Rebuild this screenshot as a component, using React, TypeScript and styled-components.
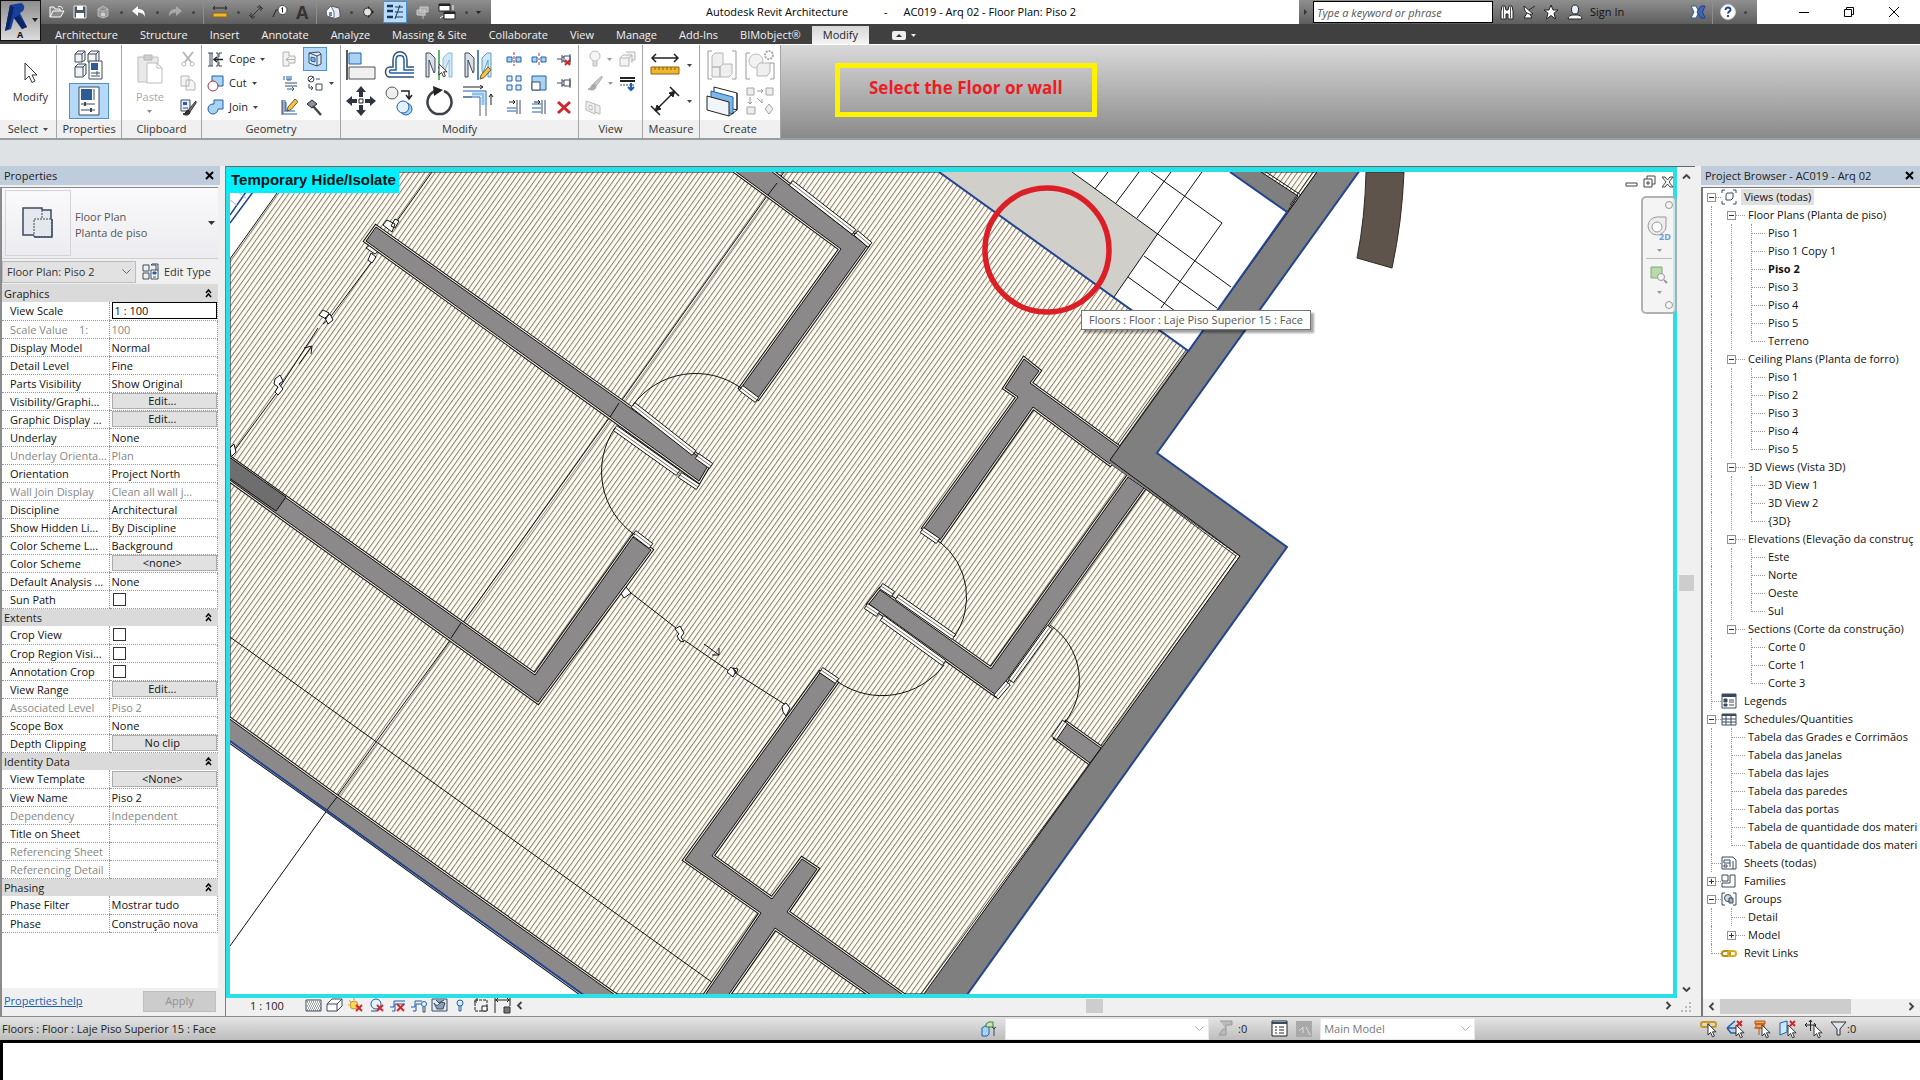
import React from "react";
import styled, { createGlobalStyle, css } from "styled-components";

/* ---------- shared values ---------- */

const INK = "#1c1c1c";
const STEEL = "#3a4a5c";
const BLUE = "#1f5fae";
const SKY = "#a8d4f2";
const RED = "#d3232b";

const GlobalStyle = createGlobalStyle`
  *, *::before, *::after { box-sizing: border-box; }
  html, body { margin: 0; padding: 0; background: #fff; }
  body { font-family: "Open Sans", "Noto Sans", sans-serif; font-size: 11px; line-height: 16px; color: ${INK}; overflow: hidden; }
  button, input, select { font: inherit; color: inherit; margin: 0; }
  button { background: none; border: 0; padding: 0; }
  svg { display: block; flex: none; }
`;

const Page = styled.div`
  display: flex;
  flex-direction: column;
  height: 100vh;
  background: #fff;
`;

/* ---------- icons ---------- */

type IconProps = { w: number; h?: number; vb?: string; children: React.ReactNode };

const Icon = ({ w, h = w, vb, children }: IconProps) => (
  <svg width={w} height={h} viewBox={vb ?? `0 0 ${w} ${h}`} fill="none" stroke={STEEL} strokeWidth="1" aria-hidden="true">
    {children}
  </svg>
);

const Caret = ({ color = "#444" }: { color?: string }) => (
  <Icon w={5} h={3}>
    <path d="M0 0h5L2.500 3z" fill={color} stroke="none" />
  </Icon>
);

const Pointer = ({ x = 0, y = 0 }: { x?: number; y?: number }) => (
  <path d={`M${x} ${y}v11l2.600-2.500 1.900 4.300 1.900-.8-1.900-4.200h3.600z`} fill="#fff" stroke="#222" strokeWidth=".9" />
);

const RedX = ({ x, y, s = 5 }: { x: number; y: number; s?: number }) => (
  <path d={`M${x} ${y}l${s} ${s}M${x + s} ${y}l${-s} ${s}`} stroke={RED} strokeWidth="1.900" />
);

const Pencil = ({ x, y }: { x: number; y: number }) => (
  <path d={`M${x} ${y}l1-4 7-8 3 2.600-7 8z`} fill="#f5c243" stroke="#5c4a1c" strokeWidth=".9" />
);

const OpenIcon = () => (
  <Icon w={16}><path d="M1 13V3h4l1 2h5v2M1 13l3-6h11l-3.500 6z" fill="#8d8d8d" stroke="#fff" /><path d="M9 3c3-1.500 4 0 4.500 2" stroke="#fff" /></Icon>
);
const SaveIcon = () => (
  <Icon w={14}><path d="M1 1h12v12H1z" fill="#4c5866" stroke="#eee" /><path d="M4 1h6v4H4zM3 8h8v5H3z" fill="#fff" stroke="none" /></Icon>
);
const SyncIcon = () => (
  <Icon w={16}><path d="M3 5l5-3 5 3v7l-5 2-5-2zM8 7v7M3 5l5 2 5-2" fill="#9a9a9a" stroke="#b9b9b9" /><path d="M6 9h4v3H6z" fill="#d0d0d0" stroke="none" /></Icon>
);
const UndoIcon = ({ flip = false, color = "#fff" }: { flip?: boolean; color?: string }) => (
  <Icon w={16}><g transform={flip ? "matrix(-1 0 0 1 16 0)" : undefined}><path d="M1 7l6-5v3c5 0 7 2 7 8-1-3-3-4.500-7-4.500V12z" fill={color} stroke="none" /></g></Icon>
);
const RulerMini = () => (
  <Icon w={16}><path d="M1 4h14M3 2L1 4l2 2M13 2l2 2-2 2" stroke="#222" /><path d="M1 9h14v4H1z" fill="#f0b62f" stroke="#8a6412" /></Icon>
);
const DimMini = () => (
  <Icon w={16}><path d="M3 13L13 3M1 11l4 4M11 1l4 4M9 3h4v4M3 9v4h4" stroke="#333" /></Icon>
);
const TagMini = () => (
  <Icon w={16}><path d="M1 13l3-7h3" stroke="#222" /><circle cx="10.500" cy="6" r="4.500" fill="#fff" stroke="#444" /><path d="M10.500 3.500v5M9.500 4.500l1-1" stroke="#222" /></Icon>
);
const HouseMini = () => (
  <Icon w={16}><path d="M1 7l5-5 8 2 1 5v4l-6 2-7-3z" fill="#e8ecf2" stroke="#556" /><path d="M1 7l5-5 3 6v6l-7-2z" fill="#fff" stroke="#667" /><path d="M4 8h3v4H4z" fill="#6b86b5" stroke="none" /></Icon>
);
const SectionMini = () => (
  <Icon w={14}><path d="M7 1l6 6-6 6z" fill="#222" stroke="none" /><circle cx="6.500" cy="7" r="4" fill="#e4e4e4" stroke="#333" /></Icon>
);
const ThinLines = () => (
  <Icon w={18}><path d="M1 3h6M1 8h6M1 14h6" stroke="#16375f" strokeWidth="2.500" /><path d="M9 16L14 2M9 4h8M9 9h8M9 14h8" stroke="#16375f" /></Icon>
);
const CloseHidden = () => (
  <Icon w={15}><path d="M5 2h8v5H5zM2 5h8v5H2z" fill="#aaa" stroke="#ccc" /><path d="M5 10h6M8 10v4" stroke="#bbb" /></Icon>
);
const SwitchWin = () => (
  <Icon w={18}><path d="M1 1h11v7H1zM6 9h11v7H6z" fill="#fff" stroke="#222" /><path d="M1 2h11M6 10h11" stroke="#222" strokeWidth="2" /><path d="M15 2v5M2 15l3-2" stroke="#fff" /></Icon>
);

const Binoculars = () => (
  <Icon w={16}><path d="M2 15V7l1-5h3l1 4h2l1-4h3l1 5v8H9v-5H7v5z" fill="#fff" stroke="#222" /><path d="M4.500 3v11M11.500 3v11" stroke="#555" /></Icon>
);
const Dish = () => (
  <Icon w={16}><path d="M3 2c0 6 4 9 9 8zM6 9l-3 5h8l-2-4M8 6l6-4" fill="#fff" stroke="#222" /></Icon>
);
const StarIcon = () => (
  <Icon w={16}><path d="M8 1l2 5h5l-4 3.200L12.500 15 8 11.500 3.500 15 5 9.200 1 6h5z" fill="#fff" stroke="#222" /></Icon>
);
const UserIcon = () => (
  <Icon w={16}><ellipse cx="8" cy="5.500" rx="3.500" ry="4.500" fill="#e8f0fa" stroke="#222" /><path d="M1 15c0-3 3-4 5-4h4c2 0 5 1 5 4z" fill="#fff" stroke="#222" /></Icon>
);
const ExchangeX = () => (
  <Icon w={16}><path d="M1 2h5l3 6-3 6H1l3-6z" fill="#fff" stroke="#2d57a8" /><path d="M15 2h-4L7 8l4 6h4l-2.500-6z" fill="#3d68b8" stroke="#1f3f86" /></Icon>
);
const HelpIcon = () => (
  <Icon w={18}><circle cx="9" cy="9" r="7.500" fill="#fff" stroke="#ccd" /><path d="M6.500 7c0-3.500 5.500-3 5 0-.3 1.500-2.500 1.700-2.500 3.500M9 12v2" stroke="#1c3f86" strokeWidth="1.900" /></Icon>
);

const CursorBig = () => <Icon w={15} h={22}><path d="M2 1v17l4-4 3 6.500 3-1.500-3-6h5z" fill="#fff" stroke="#333" /></Icon>;
const TypeProps = () => (
  <Icon w={30}><path d="M1 4l3-3h7v9l-3 2H1zM14 4l3-3h8v9l-2 2h-9zM1 17l3-3h8v10l-3 3H1z" fill="#f1f3f5" /><path d="M1 4h7v8M11 1L8 4M14 4h8v7M25 1l-3 3M1 17h8v9M12 14l-3 3" /><path d="M15 11h13v18H15z" fill="#fff" /><path d="M17 13h7v7h-7z" fill="#2c5b98" stroke="none" /><path d="M17 23h9M17 26h9M23 21v4" /></Icon>
);
const PropsIcon = () => (
  <Icon w={22} h={30}><path d="M1 1h20v28H1z" fill="#fff" /><path d="M3 3h11v11H3z" fill="#2c5b98" stroke="none" /><path d="M16 3v11M3 18h14M3 24h14" /><path d="M7 16v4M13 22v4" strokeWidth="2" /></Icon>
);
const PasteIcon = () => (
  <Icon w={26} h={30}><path d="M1 3h20v25H1z" fill="#e9e9e9" stroke="#bdbdbd" /><path d="M7 1h8v5H7z" fill="#cfcfcf" stroke="#b5b5b5" /><path d="M10 9h10l5 5v15H10z" fill="#fff" stroke="#bdbdbd" /><path d="M20 9v5h5" stroke="#bdbdbd" /></Icon>
);
const CutIcon = () => (
  <Icon w={16}><path d="M3 1l8 10M13 1L5 11" stroke="#b5b5b5" strokeWidth="2" /><circle cx="4" cy="13" r="2" stroke="#b5b5b5" /><circle cx="12" cy="13" r="2" stroke="#b5b5b5" /></Icon>
);
const CopyClip = () => (
  <Icon w={16}><path d="M1 1h8v10H1zM6 5h6l3 3v7H6z" fill="#f5f5f5" stroke="#b5b5b5" /></Icon>
);
const MatchIcon = () => (
  <Icon w={17}><path d="M1 1h9v11H1z" fill="#eef" /><path d="M3 3h4v3H3z" fill={BLUE} stroke="none" /><path d="M3 9h5" /><path d="M16 2l-7 8-1 2 2 1 6-9z" fill="#777" stroke="#333" /><path d="M8 11c-2 0-2 4-5 4 3 2 7 1 7-2z" fill="#333" stroke="#222" /></Icon>
);
const CopeIcon = () => (
  <Icon w={17}><path d="M1 2h5M1 15h5M3 2v13M5 2v13M9 2h2v13H9M15 2h-3v4M15 15h-3v-4" /><path d="M16 8.500H7M10 6L7 8.500 10 11" stroke="#222" strokeWidth="1.500" /></Icon>
);
const CutGeo = () => (
  <Icon w={17}><path d="M5 1h11v10H5z" fill={SKY} stroke={BLUE} /><circle cx="6" cy="11" r="5" fill="#fff" stroke="#a8353b" /></Icon>
);
const JoinGeo = () => (
  <Icon w={17}><path d="M7 1h9v9h-5a5 5 0 1 1-5-5h1z" fill={SKY} stroke={BLUE} /></Icon>
);
const SplitFace = () => (
  <Icon w={16}><path d="M1 1h6v4h6v7H7v3H1z" fill="#f2f2f2" stroke="#b0b0b0" /><path d="M13 8.500H4M7 6L4 8.500 7 11" stroke="#b0b0b0" /></Icon>
);
const PaintFace = () => (
  <Icon w={16}><path d="M2 2l10-1 2 2v10l-4 2-8-3z" fill="#dcebf7" stroke={STEEL} /><path d="M2 2l8 3v10M10 5l4-2" /><path d="M4 6l4 1v4l-4-1z" fill="#7db7e8" stroke={BLUE} /></Icon>
);
const WallOpen = () => (
  <Icon w={16}><path d="M2 1v4M5 1v4h4V1M7 1v4" stroke={BLUE} /><path d="M3 8h12M3 11h12" /><path d="M5 14h7M10 12l2 2-2 2" stroke={BLUE} /></Icon>
);
const Demolish = () => (
  <Icon w={16}><circle cx="4" cy="4" r="3" /><path d="M2 6l4-4M9 9h6v6H9zM2 9v4h4M4 11l2 2-2 2M9 4h4" /></Icon>
);
const CornerPencil = () => (
  <Icon w={17}><path d="M2 1v14h14M5 3v9h9" stroke={BLUE} /><path d="M1 1v15M4 1v12" /><Pencil x={6} y={12} /></Icon>
);
const Hammer = () => (
  <Icon w={17}><path d="M1 5l5-4 5 4-5 4z" fill="#8b929b" stroke="#222" /><path d="M7 7l8 9" stroke="#444" strokeWidth="2.500" /></Icon>
);
const AlignIcon = () => (
  <Icon w={32}><path d="M2 1v30" stroke="#222" strokeWidth="1.500" /><path d="M4 4h12v11H4z" fill={SKY} stroke={BLUE} /><path d="M4 18h26v12H4z" fill="#f0f0f0" stroke="#555" /></Icon>
);
const OffsetIcon = () => (
  <Icon w={32}><path d="M30 28H6c-6 0-6-10 0-10h3v-7c0-11 14-11 14 0v7h7" stroke="#35516f" strokeWidth="1.500" /><path d="M30 24H7c-2 0-2-3 0-3h5V11c0-6 8-6 8 0v10h10" stroke={BLUE} strokeWidth="1.500" /></Icon>
);
const MirrorPick = () => (
  <Icon w={32}><path d="M3 4v24h3V11l5 13 1-2V9L7 4z" fill="#d9dee4" /><path d="M29 4v24h-3V11l-5 13-1-2V9l5-5z" fill="#cfe7f6" stroke="#8bbbd8" /><path d="M16 1v30" stroke="#2f9e3c" strokeWidth="1.500" strokeDasharray="14 2 3 2" /><Pointer x={16} y={15} /></Icon>
);
const MirrorDraw = () => (
  <Icon w={32}><path d="M3 4v24h3V11l5 13 1-2V9L7 4z" fill="#d9dee4" /><path d="M29 4v24h-3V11l-5 13-1-2V9l5-5z" fill="#cfe7f6" stroke="#5f9cc8" /><path d="M16 1v30" stroke={BLUE} strokeWidth="1.500" /><Pencil x={18} y={30} /></Icon>
);
const MoveIcon = () => (
  <Icon w={32}><path d="M16 1l5 6h-3v5h-4V7h-3zM16 31l5-6h-3v-5h-4v5h-3zM1 16l6-5v3h5v4H7v3zM31 16l-6-5v3h-5v4h5v3z" fill="#2c3540" stroke="none" /><path d="M14 14h4v4h-4z" fill="#fff" stroke="#222" /></Icon>
);
const CopyIcon = () => (
  <Icon w={32}><circle cx="8" cy="8" r="6" fill="#eee" stroke="#555" /><circle cx="22" cy="24" r="6" fill={SKY} stroke={BLUE} /><circle cx="19" cy="22" r="6" fill="#e2f2fc" stroke={BLUE} /><path d="M17 6h8v7M22 10l3 4 3-4" stroke="#222" strokeWidth="1.500" /></Icon>
);
const RotateIcon = () => (
  <Icon w={32}><path d="M12 6a12 12 0 1 0 9 0" stroke="#3a424c" strokeWidth="2.500" /><path d="M10 1l10 4-9 6z" fill="#222" stroke="none" /></Icon>
);
const TrimIcon = () => (
  <Icon w={32}><path d="M1 2h20M18 0l3 2-3 2" stroke="#222" /><path d="M10 9h11v11" stroke="#8cc4ee" strokeWidth="3" /><path d="M1 6h23v14M1 12h17v8" stroke={BLUE} /><path d="M18 20v11M24 20v11M1 12h9" stroke="#57606b" /><path d="M29 20V9M27 12l2-3 2 3" stroke="#222" /></Icon>
);
const SplitEl = ({ gap = false }: { gap?: boolean }) => (
  <Icon w={16}><path d="M1 6h5v5H1zM10 6h5v5h-5z" fill={SKY} stroke={BLUE} /><path d={gap ? "M8 2v3M8 7v2M8 11v3" : "M8 1v14"} stroke="#a8353b" strokeDasharray={gap ? undefined : "3 1"} /></Icon>
);
const PinIcon = ({ off = false }: { off?: boolean }) => (
  <Icon w={16}><path d="M1 8h5M6 4v8M8 5h6v6H8zM6 6h2M6 10h2M14 3v10" />{off && <RedX x={9} y={9} />}</Icon>
);
const ArrayIcon = () => (
  <Icon w={16}><path d="M1 1h5v5H1zM10 1h5v5h-5zM1 10h5v5H1zM10 10h5v5h-5z" fill="#dcebf7" stroke={BLUE} /></Icon>
);
const ScaleIcon = () => (
  <Icon w={16}><path d="M1 1h14v14H1z" fill={SKY} stroke={BLUE} /><path d="M1 7h8v8H1z" fill="#fff" stroke={STEEL} /></Icon>
);
const TrimSingle = ({ multi = false }: { multi?: boolean }) => (
  <Icon w={16}><path d="M11 1v14M14 1v14" /><path d={multi ? "M1 5h9M1 9h9M1 13h9" : "M1 9h9M1 12h9"} stroke={BLUE} /><path d="M3 3h6M7 1l2 2-2 2" stroke="#222" /></Icon>
);
const DeleteIcon = () => <Icon w={16}><path d="M2 3l12 11M14 3L2 14" stroke={RED} strokeWidth="3" /></Icon>;
const BulbIcon = () => <Icon w={14} h={18}><circle cx="7" cy="6" r="5" fill="#f5f5f5" stroke="#bbb" /><path d="M5 11v5h4v-5" fill="#ddd" stroke="#bbb" /></Icon>;
const BoxesIcon = () => <Icon w={17}><path d="M1 7h9v8H1zM4 4h9v8M7 1h9v8h-3M1 7l3-3M10 7l3-3" fill="#f2f2f2" stroke="#b5b5b5" /></Icon>;
const BrushIcon = () => <Icon w={16}><path d="M15 1L7 8l2 3 6-8z" fill="#ccc" stroke="#aaa" /><path d="M7 9c-3 0-2 4-6 5 4 2 8 1 8-3z" fill="#aaa" stroke="#aaa" /></Icon>;
const LineworkIcon = () => <Icon w={17}><path d="M1 3h15M1 6h15" stroke="#222" strokeWidth="2" /><path d="M1 10h15" strokeDasharray="2 1" /><path d="M12 8v7M9 12l3 3 3-3" stroke={BLUE} strokeWidth="2" /></Icon>;
const CutProfile = () => <Icon w={17}><path d="M1 2l9 3v10l-9-4zM10 5l5 2v8l-5-2M4 6v4l3 1V7z" fill="#eee" stroke="#bbb" /></Icon>;
const RulerBig = () => (
  <Icon w={30} h={26}><path d="M2 6h26M6 2L2 6l4 4M24 2l4 4-4 4" stroke="#222" strokeWidth="1.500" /><path d="M1 15h28v7H1z" fill="#f0b62f" stroke="#8a6412" /><path d="M5 15v3M9 15v3M13 15v3M17 15v3M21 15v3M25 15v3" stroke="#8a6412" /></Icon>
);
const DimBig = () => (
  <Icon w={30}><path d="M6 24L24 6M1 20l9 9M20 1l9 9" stroke="#222" strokeWidth="1.500" /><path d="M5 25l2-6 4 4zM25 5l-2 6-4-4z" fill="#222" stroke="#222" /></Icon>
);
const AssemblyIcon = () => (
  <Icon w={30}><path d="M5 1H1v28h4M25 1h4v28h-4" stroke="#9a9a9a" /><path d="M5 6l3-3h8v11l-3 3H5zM5 17h8v10H5zM13 17l3-3h9v10l-3 3h-9z" fill="#efefef" stroke="#b5b5b5" /></Icon>
);
const GroupIcon = () => (
  <Icon w={30}><path d="M5 3H1v26h4M25 13h4v16h-4" stroke="#9a9a9a" /><circle cx="11" cy="11" r="7" fill="#f2f2f2" stroke="#bbb" /><path d="M12 16l3-3h10v9l-3 4H12z" fill="#efefef" stroke="#b5b5b5" /><circle cx="24" cy="5" r="4" stroke="#aaa" strokeWidth="2" strokeDasharray="2 1" /></Icon>
);
const PanelsIcon = () => (
  <Icon w={34} h={32}><path d="M9 2l23 6v17l-23-6z" fill="#fff" stroke="#222" /><path d="M6 6l22 6v17L6 23z" fill="#7db7e8" stroke={BLUE} /><path d="M2 11l22 6v14L2 25z" fill="#f1f5f9" stroke="#222" /><path d="M24 31l8-6V8" stroke="#222" /></Icon>
);
const SimilarIcon = () => (
  <Icon w={30}><path d="M2 2h7v7H2zM21 2h7v7h-7zM2 21h8v7H2zM24 18l4 5-4 5-4-5z" fill="#ededed" stroke="#a5a5a5" /><path d="M12 5h6M16 3l2 2-2 2M5 11v7M3 16l2 2 2-2M12 12l5 5v-4" stroke="#9a9a9a" /></Icon>
);

/* ---------- title bar ---------- */

const barGradient = css`background: linear-gradient(#8f8f8f, #5e5e5e);`;

const TopArea = styled.header`
  position: relative;
  flex: none;
  background: #404040;
`;

const TitleRow = styled.div`
  display: flex;
  height: 24px;
  background: #fff;
`;

const AppButton = styled.button`
  position: absolute;
  z-index: 2;
  left: 0;
  top: 0;
  width: 41px;
  height: 41px;
  border: 1px solid #111;
  background: linear-gradient(#8c8c8c, #dcdcdc);
`;

const QuickAccess = styled.div`
  ${barGradient}
  display: flex;
  align-items: center;
  width: 491px;
  padding-left: 49px;
  gap: 8px;
`;

const QuickItem = styled.button<{ $on?: boolean }>`
  display: flex;
  align-items: center;
  justify-content: center;
  min-width: 4px;
  height: 24px;
  ${(p) => p.$on && css`width: 24px; height: 22px; background: #b9dcf8; border: 1px solid #4d92cf;`}
`;

const QuickLetter = styled.span`
  font-size: 18px;
  line-height: 22px;
  font-weight: 700;
  color: #333;
`;

const Divider = styled.span`
  width: 1px;
  height: 24px;
  background: #8d8d8d;
`;

const AppTitle = styled.h1`
  flex: 1;
  display: flex;
  justify-content: center;
  gap: 16px;
  margin: 0;
  padding-right: 8px;
  font-size: 11px;
  line-height: 24px;
  font-weight: 400;
  color: #000;
`;

const ProductName = styled.span`
  margin-right: 20px;
`;

const InfoCenter = styled.div`
  ${barGradient}
  display: flex;
  align-items: center;
  gap: 6px;
  width: 458px;
  padding-left: 5px;
`;

const SearchBox = styled.input`
  width: 180px;
  height: 22px;
  border: 1px solid #000;
  border-radius: 0;
  background: #fff;
  padding: 0 3px;
  font-style: italic;
  &::placeholder { color: #555; opacity: 1; }
`;

const SignIn = styled.button`
  display: flex;
  align-items: center;
  gap: 7px;
  width: 119px;
  padding-left: 2px;
  color: #111;
`;

const WindowButtons = styled.div`
  display: flex;
  align-items: center;
  justify-content: space-around;
  width: 163px;
  padding: 0 3px 0 24px;
`;

/* ---------- ribbon ---------- */

const TabRow = styled.nav`
  display: flex;
  align-items: flex-end;
  height: 20px;
  padding-left: 44px;
  background: #404040;
`;

const Tab = styled.button<{ $on?: boolean }>`
  height: 18px;
  padding: 0 11px;
  line-height: 18px;
  color: #f1f1f1;
  white-space: nowrap;
  ${(p) => p.$on && css`background: linear-gradient(#d6d6d6, #f4f4f4); color: #222;`}
`;

const TabToggle = styled.button`
  display: flex;
  align-items: center;
  gap: 5px;
  height: 18px;
  margin-left: 23px;
`;

const Ribbon = styled.section`
  display: flex;
  flex: none;
  height: 96px;
  background: linear-gradient(#d9d9d9, #8a8a8a);
  border-top: 1px solid #fff;
  border-bottom: 2px solid #9c9c9c;
`;

const Panel = styled.div<{ $w: number }>`
  display: flex;
  flex-direction: column;
  width: ${(p) => p.$w}px;
  background: #fff;
  border-right: 1px solid #a5a5a5;
`;

const PanelBody = styled.div<{ $gap?: number; $end?: boolean }>`
  flex: 1;
  display: flex;
  justify-content: ${(p) => (p.$end ? "flex-end" : "center")};
  gap: ${(p) => p.$gap ?? 6}px;
  padding: 2px 2px 0;
`;

const PanelTitle = styled.h2`
  display: flex;
  align-items: center;
  justify-content: center;
  gap: 5px;
  margin: 0;
  height: 18px;
  font-size: 11px;
  font-weight: 400;
  line-height: 18px;
  color: #333;
  background: #f0f0f0;
`;

const BigStack = styled.div`
  display: grid;
  grid-template-rows: 36px 36px;
  align-items: center;
  justify-items: center;
`;

const BigButton = styled.button<{ $on?: boolean; $muted?: boolean }>`
  display: flex;
  flex-direction: column;
  align-items: center;
  gap: 5px;
  min-height: 34px;
  justify-content: center;
  color: ${(p) => (p.$muted ? "#a8a8a8" : "#333")};
  ${(p) => p.$on && css`width: 38px; background: #b5d9f6; outline: 1px solid #4d92cf;`}
`;

const SmallGrid = styled.div<{ $cols: string }>`
  display: grid;
  grid-template-columns: ${(p) => p.$cols};
  grid-template-rows: repeat(3, 24px);
  align-items: center;
  justify-items: center;
`;

const SmallButton = styled.button<{ $on?: boolean; $start?: boolean }>`
  display: flex;
  align-items: center;
  justify-content: center;
  gap: 5px;
  height: 22px;
  min-width: 22px;
  ${(p) => p.$start && css`justify-self: start;`}
  ${(p) => p.$on && css`background: #b5d9f6; outline: 1px solid #4d92cf;`}
`;

const WithCaret = styled.div`
  display: flex;
  align-items: center;
  gap: 7px;
`;

const Callout = styled.div`
  align-self: flex-start;
  margin: 18px 0 0 54px;
  padding: 11px 29px 15px;
  border: 5px solid #fff200;
  color: #ed1c24;
  font-size: 17px;
  line-height: 18px;
  font-weight: 700;
`;

const OptionsBar = styled.div`
  flex: none;
  height: 26px;
  background: #dfe2e5;
`;

/* ---------- work area ---------- */

const Work = styled.main`
  flex: 1;
  min-height: 0;
  display: flex;
  background: #f0f0f0;
`;

const PaletteHeader = styled.div`
  display: flex;
  flex: none;
  align-items: center;
  justify-content: space-between;
  height: 19px;
  padding: 0 6px 0 4px;
  background: #bfccdb;
  white-space: nowrap;
`;

const Properties = styled.aside`
  display: flex;
  flex-direction: column;
  width: 220px;
  flex: none;
  background: #f0f0f0;
`;

const PaletteBody = styled.div`
  flex: 1;
  display: flex;
  flex-direction: column;
  min-height: 0;
  margin: 2px 2px 0 0;
  border-left: 2px solid #8b8b8b;
  border-top: 1px solid #8b8b8b;
`;

const TypeSelector = styled.button`
  display: flex;
  align-items: center;
  height: 71px;
  padding: 3px;
  text-align: left;
  background: linear-gradient(#fafafc, #ececf0);
  border-bottom: 1px solid #d0d0d0;
  color: #555;
`;

const TypeThumb = styled.span`
  display: flex;
  align-items: center;
  justify-content: center;
  width: 66px;
  height: 66px;
  border: 1px solid #d4d4d8;
`;

const TypeText = styled.span`
  flex: 1;
  padding: 3px 0 0 4px;
`;

const InstanceRow = styled.div`
  display: flex;
  gap: 6px;
  align-items: center;
  height: 25px;
  color: #333;
`;

const InstanceSelect = styled.select`
  appearance: none;
  width: 134px;
  height: 22px;
  padding: 0 4px;
  border: 1px solid #bdbdbd;
  border-radius: 0;
  background: #e2e2e2 url("data:image/svg+xml,%3Csvg xmlns='http://www.w3.org/2000/svg' width='9' height='6'%3E%3Cpath d='M.5.5l4 4 4-4' fill='none' stroke='%23666'/%3E%3C/svg%3E") no-repeat right 4px center;
`;

const EditType = styled.button`
  display: flex;
  align-items: center;
  gap: 5px;
`;

const PropScroll = styled.div`
  flex: 1;
  background: #fff;
`;

const PropTable = styled.table`
  width: 100%;
  border-collapse: collapse;
  table-layout: fixed;
  tr { height: 18px; }
  th, td { padding: 0; font-weight: 400; text-align: left; white-space: nowrap; overflow: hidden; height: 18px; line-height: 17px; }
`;

const GroupHead = styled.th`
  background: #dadada;
`;

const GroupInner = styled.span`
  display: flex;
  align-items: center;
  justify-content: space-between;
  padding: 0 6px 0 2px;
`;

const NameCell = styled.th<{ $muted?: boolean }>`
  border-bottom: 1px dotted #999;
  color: ${(p) => (p.$muted ? "#888" : "#111")};
  &&& { padding-left: 8px; }
`;

const ValueCell = styled.td<{ $muted?: boolean }>`
  border-bottom: 1px dotted #999;
  border-left: 1px dotted #999;
  border-right: 1px dotted #999;
  color: ${(p) => (p.$muted ? "#888" : "#111")};
  &&& { padding-left: 2px; }
`;

const CellButton = styled.button`
  display: block;
  width: 100%;
  height: 16px;
  padding-right: 4px;
  line-height: 14px;
  background: #e1e1e1;
  border: 1px solid #adadad;
`;

const CellInput = styled.input`
  display: block;
  width: 100%;
  height: 17px;
  padding: 0 2px;
  border: 1px solid #000;
  border-radius: 0;
`;

const Tick = styled.input`
  appearance: none;
  display: block;
  width: 13px;
  height: 13px;
  margin: 0 0 0 1px;
  border: 1px solid #333;
  background: #fff;
`;

const PaletteFoot = styled.div`
  display: flex;
  align-items: center;
  justify-content: space-between;
  flex: none;
  height: 28px;
  padding: 0 2px 2px;
  a { color: #1c5fb0; }
`;

const ApplyButton = styled.button`
  width: 73px;
  height: 21px;
  background: #cccccc;
  border: 1px solid #bfbfbf;
  &:disabled { color: #929292; }
`;

/* ---------- view window ---------- */

const ViewArea = styled.section`
  flex: 1;
  min-width: 0;
  display: grid;
  grid-template-columns: minmax(0, 1fr) 18px;
  grid-template-rows: minmax(0, 1fr) 18px;
  margin-left: 5px;
  border-left: 1px solid #7b7b7b;
  border-top: 1px solid #5f6a6a;
`;

const Canvas = styled.div`
  position: relative;
  border: 4px solid #29e0e6;
  border-top-width: 5px;
  background: #fff;
  svg.plan { width: 100%; height: 100%; }
`;

const ModeLabel = styled.span`
  position: absolute;
  left: -4px;
  top: -3px;
  padding: 0 3px 2px 5px;
  background: #00f0ff;
  font-family: "Liberation Sans", Arial, sans-serif;
  font-size: 15px;
  line-height: 22px;
  font-weight: 700;
  color: #111;
`;

const MdiButtons = styled.div`
  position: absolute;
  right: -1px;
  top: 3px;
  display: flex;
  gap: 5px;
`;

const NavBar = styled.div`
  position: absolute;
  right: -4px;
  top: 24px;
  width: 36px;
  height: 118px;
  padding: 3px 2px;
  display: flex;
  flex-direction: column;
  align-items: center;
  justify-content: space-between;
  border: 2px solid rgba(150, 150, 150, 0.7);
  border-radius: 5px;
  background: rgba(240, 240, 240, 0.75);
  hr { width: 26px; margin: 0; border: 0; border-top: 1px solid #bbb; }
`;

const NavDot = styled.button`
  align-self: flex-end;
  width: 8px;
  height: 8px;
  border: 1px solid #999;
  border-radius: 50%;
`;

const Tooltip = styled.div`
  position: absolute;
  left: 851px;
  top: 138px;
  padding: 0 7px;
  border: 1px solid #767676;
  background: #fff;
  box-shadow: 3px 3px 2px rgba(0, 0, 0, 0.35);
  line-height: 18px;
  color: #575757;
  white-space: nowrap;
`;

const VScroll = styled.div`
  display: flex;
  flex-direction: column;
  align-items: center;
  justify-content: space-between;
  padding: 5px 0 4px;
  background: #f0f0f0;
`;

const ScrollThumb = styled.div<{ $w: number; $h: number }>`
  width: ${(p) => p.$w}px;
  height: ${(p) => p.$h}px;
  background: #cdcdcd;
`;

const ViewControl = styled.div`
  display: flex;
  align-items: center;
  gap: 4px;
  padding: 0 4px 3px 24px;
  background: #f0f0f0;
`;

const ScaleText = styled.span`
  width: 51px;
`;

const HTrack = styled.div`
  flex: 1;
  display: flex;
  align-items: center;
  justify-content: center;
`;

/* ---------- project browser ---------- */

const Browser = styled.aside`
  display: flex;
  flex-direction: column;
  flex: none;
  width: 219px;
  margin-left: 6px;
`;

const TreeBox = styled.div`
  flex: 1;
  min-height: 0;
  display: flex;
  flex-direction: column;
  margin-top: 2px;
  border-left: 2px solid #777;
  border-top: 1px solid #777;
  background: #fff;
`;

const Tree = styled.ul`
  flex: 1;
  margin: 0;
  padding: 0;
  list-style: none;
  overflow: hidden;
`;

const TreeRow = styled.li`
  display: flex;
  align-items: center;
  height: 18px;
  white-space: nowrap;
`;

const Guide = styled.span<{ $line: "none" | "full" | "half"; $w?: number }>`
  flex: none;
  align-self: stretch;
  width: ${(p) => p.$w ?? 20}px;
  padding-left: 8px;
  display: flex;
  &::before {
    content: "";
    width: 1px;
    height: ${(p) => (p.$line === "half" ? "10px" : "18px")};
    border-left: ${(p) => (p.$line === "none" ? "0" : "1px dotted #999")};
  }
`;

const Twig = styled.span<{ $w: number }>`
  flex: none;
  width: ${(p) => p.$w}px;
  border-top: 1px dotted #999;
`;

const Expander = styled.button`
  flex: none;
  display: flex;
  align-items: center;
  justify-content: center;
  width: 9px;
  height: 9px;
  border: 1px solid #919191;
  background: #fff;
`;

const TreeLabel = styled.span<{ $bold?: boolean; $picked?: boolean; $root?: boolean }>`
  padding: 0 3px;
  margin-left: ${(p) => (p.$root ? 4 : 0)}px;
  color: #111;
  font-weight: ${(p) => (p.$bold ? 700 : 400)};
  ${(p) => p.$picked && css`background: #e0e0e0;`}
`;

const BrowserScroll = styled.div`
  display: flex;
  align-items: center;
  flex: none;
  height: 17px;
  padding: 0 4px 2px 4px;
  gap: 4px;
  background: #f0f0f0;
`;

const HalfTrack = styled.div`
  flex: 1;
`;

/* ---------- status bar ---------- */

const StatusBar = styled.footer`
  display: flex;
  flex: none;
  align-items: center;
  height: 27px;
  border-top: 1px solid #8a8a8a;
  border-bottom: 3px solid #000;
  background: linear-gradient(#e4e4e4, #bdbdbd);
`;

const StatusText = styled.span`
  flex: 1;
  padding-left: 2px;
`;

const StatusTools = styled.div`
  display: flex;
  align-items: center;
  gap: 8px;
  width: 719px;
`;

const StatusSelect = styled.select<{ $w: number }>`
  appearance: none;
  width: ${(p) => p.$w}px;
  height: 22px;
  padding: 0 3px;
  border: 1px solid #e8e8e8;
  border-radius: 0;
  color: #777;
  background: #fff url("data:image/svg+xml,%3Csvg xmlns='http://www.w3.org/2000/svg' width='9' height='6'%3E%3Cpath d='M.5.5l4 4 4-4' fill='none' stroke='%23aaa'/%3E%3C/svg%3E") no-repeat right 4px center;
`;

const SelectionTools = styled.div`
  display: flex;
  align-items: center;
  gap: 6px;
  width: 220px;
`;

const StatusButton = styled.button`
  display: flex;
  align-items: center;
  height: 22px;
`;

const EditableOnly = styled(StatusButton)`
  gap: 4px;
  padding-right: 16px;
`;

const BottomStrip = styled.div`
  flex: none;
  height: 37px;
  border-left: 3px solid #000;
  background: #fff;
`;

/* ---------- floor plan ---------- */

const INNER_WALLS = [
  "376,227 709,464 699,481 366,241",
  "736,160 757,160 867,246 758,398 741,388 841,249 720,160",
  "220,451 535,675 633,537 651,550 538,702 220,473",
  "820,673 836,683 712,856 772,899 802,859 817,869 787,912 920,1007 888,1007 775,928 720,1007 697,1007 761,913 685,860",
  "880,590 991,669 1128,477 1144,488 996,695 869,604",
  "1024,359 1039,371 1030,383 1121,449 1110,464 1033,407 940,540 924,528 1018,397 1005,388",
  "1066,723 1101,748 1090,763 1056,738",
  "220,712 337,797 632,1007 600,1007 327,810 220,734",
];

const DOOR_LEAVES = [
  "633,405 694,453", "697,456 711,466",
  "615,428 678,473", "680,475 698,487",
  "791,183 854,232", "856,233 870,245",
  "897,597 954,637", "881,586 893,594",
  "882,618 944,663", "866,606 878,614",
  "1050,627 1011,681", "1008,683 996,697",
  "741,388 757,400", "634,533 651,546", "821,670 837,681", "922,530 938,541", "1065,722 1054,738",
];

const DOOR_ARCS = [
  "M633 405A78 78 0 0 1 741 388",
  "M615 428A77 77 0 0 0 635 535",
  "M940 542A70 70 0 0 1 954 637",
  "M944 665A78 78 0 0 1 838 682",
  "M1050 625A67 67 0 0 1 1065 722",
];

/* A thin frame drawn around the segment between two "x,y" points. */
const framePoints = (segment: string, half = 3) => {
  const [[x1, y1], [x2, y2]] = segment.split(" ").map((p) => p.split(",").map(Number));
  const len = Math.hypot(x2 - x1, y2 - y1);
  const nx = (-(y2 - y1) / len) * half;
  const ny = ((x2 - x1) / len) * half;
  return `${x1 + nx},${y1 + ny} ${x2 + nx},${y2 + ny} ${x2 - nx},${y2 - ny} ${x1 - nx},${y1 - ny}`;
};

const FloorPlan = () => (
  <svg className="plan" viewBox="230 172 1443 822" preserveAspectRatio="xMinYMin slice" role="img" aria-label="Floor plan Piso 2">
    <defs>
      <pattern id="boards" width="4.290" height="40" patternUnits="userSpaceOnUse" patternTransform="translate(230 172) rotate(35.300)">
        <rect width="4.290" height="40" fill="#fffbf1" />
        <rect width="1" height="40" fill="#857d70" />
      </pattern>
    </defs>

    <path d="M230 259L292 172H1317L1119 447L1108 462L1240 556L925 994H612L230 719z" fill="url(#boards)" stroke="#111" />
    <path d="M230 223L253 192M230 215L246 192" stroke="#23448f" strokeWidth="1.500" />
    <path d="M230 200l8 6M238 192l8 6" stroke="#9db3da" />

    <path d="M939 172H1230L1287 212L1188.500 351z" fill="#fff" />
    <path d="M939 172H1072L1157.500 234L1114 297z" fill="#d1cfca" />
    <g fill="none" stroke="#111">
      <path d="M1072 172L1231 287M1151 172L1222 223L1161 308M1108 172L1095 189M1139 172L1116 203M1171 172L1137 218M1202 172L1157.500 234L1114 297M1144 256L1217 308M1128 277L1175 311" />
      <path d="M230 637L727 993M784 172L622 400L480 599L376 742L230 946" />
      <path d="M786.500 172L624 401L482 600L338 797" stroke="#999" />
      <path d="M432 172L392 228M376 256L329 319L323 324M318 328L280 387M276 394L231 455" />
      <path d="M622 586L676 628M684 640L729 671M737 674L789 707" />
      <path d="M299 364L311 347M304 348l8-2-1 8M704 644l15 11M712 655l7 0v-7" />
    </g>
    <g fill="#fff" stroke="#111">
      <path d="M383 225l4-5 8 4-3 8zM391 226l4-7 4 2-4 7zM366 248l5-4 9 6-5 4zM371 253l5 4-4 6-4-3z" />
      <path d="M275 379l5-4 3 6-4 3 4 5-5 6-3-3 3-5-4-3zM319 315l4-5 6 3-3 6zM325 318l5-4 3 6-5 4zM230 448l4-4 2 8-5 5z" />
      <path d="M675 629l5-3 4 7-3 4 3 5-4-1-3-5 2-2zM727 672l4-5 5 4-3 6zM733 668l5 1-2 5zM620 592l6-5 5 6-7 5zM782 706l4-3 4 5-4 8-3-4z" />
    </g>

    {INNER_WALLS.map((p) => <polygon key={p} points={p} fill="none" stroke="#111" strokeWidth="5" />)}
    {INNER_WALLS.map((p) => <polygon key={p} points={p} fill="#8b8989" stroke="#e9e5dc" strokeWidth="3" />)}
    {INNER_WALLS.map((p) => <polygon key={p} points={p} fill="#8b8989" stroke="#111" />)}
    <path d="M225 454L286 497L276 511L225 475z" fill="#6e6e6e" stroke="#111" />
    <path d="M777 183L768 195M461 623L451 638M337 797L327 810M619 403L610 417" stroke="#111" fill="none" />

    {DOOR_LEAVES.map((p) => (
      <g key={p}>
        <polygon points={framePoints(p)} fill="#fffdf8" stroke="#111" />
        <polyline points={p} stroke="#777" fill="none" />
      </g>
    ))}
    {DOOR_ARCS.map((d) => <path key={d} d={d} fill="none" stroke="#111" />)}

    <path d="M1317 160V172L1119 447L1108 462L1240 556L920 1000H963L1287 547L1157 453L1365 164z" fill="#7f7f7f" />
    <path d="M1230 172H1261L1298 196L1287 212z" fill="#7f7f7f" />
    <path d="M1261 172L1298 196L1287 212M1263 170L1301 195" fill="none" stroke="#111" />
    <path d="M1317 172L1189 350L1110 460L1240 556L921 998" fill="none" stroke="#111" />
    <path d="M1313 172L1290 205M1186 350L1118 444M1144 488L1236 556L1101 745M1090 763L918 998" fill="none" stroke="#333" />
    <g fill="none" stroke="#23448f" strokeWidth="2">
      <path d="M1230 172L1287 212L1188.500 351L939 172" />
      <path d="M1360 170L1157 453L1287 547L964 999" />
      <path d="M230 741L585 996" />
    </g>
    <path d="M1366 172H1404Q1402 222 1392 268L1357 258Q1365 218 1366 172z" fill="#5f544b" stroke="#2f2a26" />
    <circle cx="1047" cy="250" r="62" fill="none" stroke="#dc1f26" strokeWidth="5.500" />
  </svg>
);

/* ---------- data ---------- */

type Prop = { n: string; v?: string; kind?: "button" | "tick" | "input"; muted?: boolean };

const PROPERTY_GROUPS: { title: string; rows: Prop[] }[] = [
  { title: "Graphics", rows: [
    { n: "View Scale", v: "1 : 100", kind: "input" },
    { n: "Scale Value\u00a0\u00a0\u00a0 1:", v: "100", muted: true },
    { n: "Display Model", v: "Normal" },
    { n: "Detail Level", v: "Fine" },
    { n: "Parts Visibility", v: "Show Original" },
    { n: "Visibility/Graphi...", v: "Edit...", kind: "button" },
    { n: "Graphic Display ...", v: "Edit...", kind: "button" },
    { n: "Underlay", v: "None" },
    { n: "Underlay Orienta...", v: "Plan", muted: true },
    { n: "Orientation", v: "Project North" },
    { n: "Wall Join Display", v: "Clean all wall j...", muted: true },
    { n: "Discipline", v: "Architectural" },
    { n: "Show Hidden Li...", v: "By Discipline" },
    { n: "Color Scheme L...", v: "Background" },
    { n: "Color Scheme", v: "<none>", kind: "button" },
    { n: "Default Analysis ...", v: "None" },
    { n: "Sun Path", kind: "tick" },
  ] },
  { title: "Extents", rows: [
    { n: "Crop View", kind: "tick" },
    { n: "Crop Region Visi...", kind: "tick" },
    { n: "Annotation Crop", kind: "tick" },
    { n: "View Range", v: "Edit...", kind: "button" },
    { n: "Associated Level", v: "Piso 2", muted: true },
    { n: "Scope Box", v: "None" },
    { n: "Depth Clipping", v: "No clip", kind: "button" },
  ] },
  { title: "Identity Data", rows: [
    { n: "View Template", v: "<None>", kind: "button" },
    { n: "View Name", v: "Piso 2" },
    { n: "Dependency", v: "Independent", muted: true },
    { n: "Title on Sheet", v: "" },
    { n: "Referencing Sheet", v: "", muted: true },
    { n: "Referencing Detail", v: "", muted: true },
  ] },
  { title: "Phasing", rows: [
    { n: "Phase Filter", v: "Mostrar tudo" },
    { n: "Phase", v: "Construção nova" },
  ] },
];

type Node = { t: string; icon?: React.ReactNode; open?: boolean; bold?: boolean; picked?: boolean; kids?: Node[] };

const leaves = (...names: string[]): Node[] => names.map((t) => ({ t }));

const TREE: Node[] = [
  { t: "Views (todas)", open: true, picked: true,
    icon: <Icon w={16}><path d="M1 4V1h3M12 1h3v3M15 12v3h-3M4 15H1v-3" /><path d="M5 6l1-2h6v5l-2 2H5z" /></Icon>,
    kids: [
      { t: "Floor Plans (Planta de piso)", open: true, kids: [
        { t: "Piso 1" }, { t: "Piso 1 Copy 1" }, { t: "Piso 2", bold: true }, ...leaves("Piso 3", "Piso 4", "Piso 5", "Terreno"),
      ] },
      { t: "Ceiling Plans (Planta de forro)", open: true, kids: leaves("Piso 1", "Piso 2", "Piso 3", "Piso 4", "Piso 5") },
      { t: "3D Views (Vista 3D)", open: true, kids: leaves("3D View 1", "3D View 2", "{3D}") },
      { t: "Elevations (Elevação da construç", open: true, kids: leaves("Este", "Norte", "Oeste", "Sul") },
      { t: "Sections (Corte da construção)", open: true, kids: leaves("Corte 0", "Corte 1", "Corte 3") },
    ] },
  { t: "Legends", icon: <Icon w={16}><path d="M1 1h14v14H1z" fill="#fff" /><path d="M1 2.500h14" strokeWidth="3" /><path d="M3 6h3v3H3zM3 11h3v2H3z" fill={STEEL} /><path d="M8 7h5M8 9h5M8 12h5" /></Icon> },
  { t: "Schedules/Quantities", open: true,
    icon: <Icon w={16} h={13}><path d="M1 1h14v11H1z" fill="#fff" /><path d="M1 2h14" strokeWidth="2" /><path d="M1 6h14M1 9h14M5 1v11M10 1v11" /></Icon>,
    kids: leaves("Tabela das Grades e Corrimãos", "Tabela das Janelas", "Tabela das lajes", "Tabela das paredes", "Tabela das portas", "Tabela de quantidade dos materi", "Tabela de quantidade dos materi") },
  { t: "Sheets (todas)", icon: <Icon w={16} h={14}><path d="M1 1h11l3 3v9H1z" fill="#fff" /><path d="M3 4h6v3H3zM3 9h3v2H3zM12 5v8M9 7v4" /></Icon> },
  { t: "Families", open: false, icon: <Icon w={16} h={14}><path d="M1 1h6v6H1zM9 1h5v12H1V9h8z" fill="#fff" /></Icon> },
  { t: "Groups", open: true, icon: <Icon w={16} h={14}><path d="M4 1H1v12h3M12 1h3v12h-3" /><circle cx="7" cy="6" r="3.500" fill="#d5dbe6" /><path d="M8 6h4v5H8z" fill="#aab4c6" /></Icon>,
    kids: [{ t: "Detail" }, { t: "Model", open: false }] },
  { t: "Revit Links", icon: <Icon w={16} h={9}><rect x="1" y="2" width="8" height="5" rx="2.500" stroke="#b98d10" strokeWidth="2" /><rect x="7" y="2" width="8" height="5" rx="2.500" stroke="#d9ab1e" strokeWidth="2" /></Icon> },
];

const TABS = ["Architecture", "Structure", "Insert", "Annotate", "Analyze", "Massing & Site", "Collaborate", "View", "Manage", "Add-Ins", "BIMobject®"];

/* ---------- parts ---------- */

const Cross = ({ s = 8, w = 2 }: { s?: number; w?: number }) => (
  <Icon w={s}><path d={`M1 1L${s - 1} ${s - 1}M${s - 1} 1L1 ${s - 1}`} stroke="#000" strokeWidth={w} /></Icon>
);

const Chevron = ({ turn = 0 }: { turn?: number }) => (
  <Icon w={9}><path d="M1 6.500l3.500-3.500L8 6.500" stroke="#444" strokeWidth="1.900" transform={`rotate(${turn} 4.5 4.5)`} /></Icon>
);

const Toggle = ({ open }: { open: boolean }) => (
  <Expander aria-label={open ? "Collapse" : "Expand"}>
    <Icon w={5}><path d={open ? "M0 2.500h5" : "M0 2.500h5M2.500 0v5"} stroke="#333" /></Icon>
  </Expander>
);

const ToggleSlot = styled.span`
  display: flex;
  align-items: center;
  width: 13px;
  padding-left: 4px;
`;

const renderNodes = (nodes: Node[], depth: number, trail: boolean[]): React.ReactNode[] =>
  nodes.flatMap((node, i) => {
    const last = i === nodes.length - 1;
    const hasToggle = node.open !== undefined;
    return [
      <TreeRow key={`${trail.length}-${node.t}-${i}`}>
        {trail.map((on, k) => <Guide key={k} $line={on ? "full" : "none"} />)}
        {hasToggle ? (
          <ToggleSlot><Toggle open={!!node.open} /></ToggleSlot>
        ) : (
          <Guide $line={last ? "half" : "full"} $w={9} />
        )}
        <Twig $w={depth === 0 ? (hasToggle ? 5 : 9) : hasToggle ? 9 : 13} />
        {depth === 0 && node.icon}
        <TreeLabel $bold={node.bold} $picked={node.picked} $root={depth === 0}>{node.t}</TreeLabel>
      </TreeRow>,
      ...(node.kids ? renderNodes(node.kids, depth + 1, [...trail, !last]) : []),
    ];
  });

const PropertyValue = ({ row }: { row: Prop }) => {
  if (row.kind === "button") return <CellButton>{row.v}</CellButton>;
  if (row.kind === "tick") return <Tick type="checkbox" aria-label={row.n} />;
  if (row.kind === "input") return <CellInput defaultValue={row.v} aria-label={row.n} />;
  return <>{row.v}</>;
};

const Dot = () => <QuickItem aria-label="More"><Icon w={3}><circle cx="1.500" cy="1.500" r="1.500" fill="#444" stroke="none" /></Icon></QuickItem>;

const TitleBar = () => (
  <TitleRow>
    <QuickAccess>
      <QuickItem aria-label="Open"><OpenIcon /></QuickItem>
      <QuickItem aria-label="Save"><SaveIcon /></QuickItem>
      <QuickItem aria-label="Synchronize"><SyncIcon /></QuickItem>
      <Dot />
      <QuickItem aria-label="Undo"><UndoIcon /></QuickItem>
      <Dot />
      <QuickItem aria-label="Redo"><UndoIcon flip color="#aaa" /></QuickItem>
      <Dot />
      <Divider />
      <QuickItem aria-label="Measure"><RulerMini /></QuickItem>
      <Dot />
      <QuickItem aria-label="Aligned dimension"><DimMini /></QuickItem>
      <QuickItem aria-label="Tag"><TagMini /></QuickItem>
      <QuickItem><QuickLetter>A</QuickLetter></QuickItem>
      <Divider />
      <QuickItem aria-label="3D view"><HouseMini /></QuickItem>
      <Dot />
      <QuickItem aria-label="Section"><SectionMini /></QuickItem>
      <QuickItem aria-label="Thin lines" $on><ThinLines /></QuickItem>
      <QuickItem aria-label="Close hidden"><CloseHidden /></QuickItem>
      <QuickItem aria-label="Switch windows"><SwitchWin /></QuickItem>
      <Dot />
      <QuickItem aria-label="Customize"><Caret color="#222" /></QuickItem>
    </QuickAccess>
    <AppTitle><ProductName>Autodesk Revit Architecture</ProductName><span>-</span><span>AC019 - Arq 02 - Floor Plan: Piso 2</span></AppTitle>
    <InfoCenter>
      <Icon w={3} h={6}><path d="M0 0l3 3-3 3z" fill="#333" stroke="none" /></Icon>
      <SearchBox placeholder="Type a keyword or phrase" aria-label="Search" />
      <Binoculars /><Dish /><StarIcon />
      <SignIn><UserIcon />Sign In</SignIn>
      <ExchangeX /><Divider /><HelpIcon /><Dot />
    </InfoCenter>
    <WindowButtons>
      <button aria-label="Minimize"><Icon w={12}><path d="M1 6.500h10" stroke="#000" /></Icon></button>
      <button aria-label="Restore"><Icon w={12}><path d="M1.500 3.500h7v7h-7zM3.500 3.500v-2h7v7h-2" stroke="#000" /></Icon></button>
      <button aria-label="Close"><Cross s={12} w={1} /></button>
    </WindowButtons>
  </TitleRow>
);

const RibbonBar = () => (
  <Ribbon>
    <Panel $w={57}>
      <PanelBody $end $gap={6}><BigButton><CursorBig /><span>Modify</span></BigButton><span /></PanelBody>
      <PanelTitle>Select <Caret /></PanelTitle>
    </Panel>
    <Panel $w={65}>
      <PanelBody>
        <BigStack>
          <BigButton aria-label="Type properties"><TypeProps /></BigButton>
          <BigButton aria-label="Properties" $on><PropsIcon /></BigButton>
        </BigStack>
      </PanelBody>
      <PanelTitle>Properties</PanelTitle>
    </Panel>
    <Panel $w={80}>
      <PanelBody $gap={13} $end>
        <BigButton $muted><PasteIcon /><span>Paste</span><Caret color="#888" /></BigButton>
        <SmallGrid $cols="22px">
          <SmallButton aria-label="Cut to clipboard"><CutIcon /></SmallButton>
          <SmallButton aria-label="Copy to clipboard"><CopyClip /></SmallButton>
          <SmallButton aria-label="Match type"><MatchIcon /></SmallButton>
        </SmallGrid>
      </PanelBody>
      <PanelTitle>Clipboard</PanelTitle>
    </Panel>
    <Panel $w={139}>
      <PanelBody>
        <SmallGrid $cols="70px 25px 25px 8px">
          <SmallButton $start><CopeIcon />Cope<Caret /></SmallButton>
          <SmallButton aria-label="Split face"><SplitFace /></SmallButton>
          <SmallButton aria-label="Paint" $on><PaintFace /></SmallButton>
          <span />
          <SmallButton $start><CutGeo />Cut<Caret /></SmallButton>
          <SmallButton aria-label="Wall joins"><WallOpen /></SmallButton>
          <SmallButton aria-label="Phase"><Demolish /></SmallButton>
          <Caret />
          <SmallButton $start><JoinGeo />Join<Caret /></SmallButton>
          <SmallButton aria-label="Edit joins"><CornerPencil /></SmallButton>
          <SmallButton aria-label="Demolish"><Hammer /></SmallButton>
        </SmallGrid>
      </PanelBody>
      <PanelTitle>Geometry</PanelTitle>
    </Panel>
    <Panel $w={238}>
      <PanelBody $gap={7} $end>
        <BigStack><BigButton aria-label="Align"><AlignIcon /></BigButton><BigButton aria-label="Move"><MoveIcon /></BigButton></BigStack>
        <BigStack><BigButton aria-label="Offset"><OffsetIcon /></BigButton><BigButton aria-label="Copy"><CopyIcon /></BigButton></BigStack>
        <BigStack><BigButton aria-label="Mirror pick axis"><MirrorPick /></BigButton><BigButton aria-label="Rotate"><RotateIcon /></BigButton></BigStack>
        <BigStack><BigButton aria-label="Mirror draw axis"><MirrorDraw /></BigButton><BigButton aria-label="Trim to corner"><TrimIcon /></BigButton></BigStack>
        <SmallGrid $cols="25px 25px 25px">
          <SmallButton aria-label="Split element"><SplitEl /></SmallButton>
          <SmallButton aria-label="Split with gap"><SplitEl gap /></SmallButton>
          <SmallButton aria-label="Unpin"><PinIcon off /></SmallButton>
          <SmallButton aria-label="Array"><ArrayIcon /></SmallButton>
          <SmallButton aria-label="Scale"><ScaleIcon /></SmallButton>
          <SmallButton aria-label="Pin"><PinIcon /></SmallButton>
          <SmallButton aria-label="Trim single"><TrimSingle /></SmallButton>
          <SmallButton aria-label="Trim multiple"><TrimSingle multi /></SmallButton>
          <SmallButton aria-label="Delete"><DeleteIcon /></SmallButton>
        </SmallGrid>
      </PanelBody>
      <PanelTitle>Modify</PanelTitle>
    </Panel>
    <Panel $w={64}>
      <PanelBody>
        <SmallGrid $cols="34px 22px">
          <SmallButton aria-label="Hide"><BulbIcon /><Caret color="#999" /></SmallButton>
          <SmallButton aria-label="Displace"><BoxesIcon /></SmallButton>
          <SmallButton aria-label="Override"><BrushIcon /><Caret color="#999" /></SmallButton>
          <SmallButton aria-label="Linework"><LineworkIcon /></SmallButton>
          <SmallButton $start aria-label="Cut profile"><CutProfile /></SmallButton>
        </SmallGrid>
      </PanelBody>
      <PanelTitle>View</PanelTitle>
    </Panel>
    <Panel $w={57}>
      <PanelBody>
        <BigStack>
          <WithCaret><BigButton aria-label="Measure"><RulerBig /></BigButton><Caret /></WithCaret>
          <WithCaret><BigButton aria-label="Dimension"><DimBig /></BigButton><Caret /></WithCaret>
        </BigStack>
      </PanelBody>
      <PanelTitle>Measure</PanelTitle>
    </Panel>
    <Panel $w={81}>
      <PanelBody>
        <BigStack><BigButton aria-label="Create assembly"><AssemblyIcon /></BigButton><BigButton aria-label="Create parts"><PanelsIcon /></BigButton></BigStack>
        <BigStack><BigButton aria-label="Create group"><GroupIcon /></BigButton><BigButton aria-label="Create similar"><SimilarIcon /></BigButton></BigStack>
      </PanelBody>
      <PanelTitle>Create</PanelTitle>
    </Panel>
    <Callout>Select the Floor or wall</Callout>
  </Ribbon>
);

const PropertiesPalette = () => (
  <Properties>
    <PaletteHeader><span>Properties</span><button aria-label="Close Properties"><Cross s={9} /></button></PaletteHeader>
    <PaletteBody>
      <TypeSelector>
        <TypeThumb>
          <Icon w={32}><path d="M1 1h19v2h9v9h1v18H12v-2H1z" fill="#e4e8ec" stroke="none" /><path d="M20 3v-2H1v27h11M20 3h9v9" strokeWidth="1.500" /><path d="M12 30V12h18v18z" strokeDasharray="2 1" /><path d="M12 30h18V12" strokeWidth="1.500" /><path d="M20 3v9" strokeDasharray="2 1" /></Icon>
        </TypeThumb>
        <TypeText>Floor Plan<br />Planta de piso</TypeText>
        <Icon w={7} h={4}><path d="M0 0h7L3.500 4z" fill="#333" stroke="none" /></Icon>
      </TypeSelector>
      <InstanceRow>
        <InstanceSelect aria-label="Instance" defaultValue="p2"><option value="p2">Floor Plan: Piso 2</option></InstanceSelect>
        <EditType>
          <Icon w={17}><path d="M1 2h6v6H1zM9 2l1-1h6v6M1 10h6v6H1zM9 2h5v5" /><path d="M9 7h7v9H9z" fill="#fff" /><path d="M11 9h3v2h-3z" fill={BLUE} stroke={BLUE} /><path d="M11 14h3" /></Icon>
          Edit Type
        </EditType>
      </InstanceRow>
      <PropScroll>
        <PropTable>
          <colgroup><col width="107" /><col /></colgroup>
          {PROPERTY_GROUPS.map((g) => (
            <tbody key={g.title}>
              <tr>
                <GroupHead colSpan={2}><GroupInner>{g.title}
                  <Icon w={7} h={9}><path d="M1 4l2.500-3L6 4M1 8l2.500-3L6 8" stroke="#000" strokeWidth="1.500" /></Icon>
                </GroupInner></GroupHead>
              </tr>
              {g.rows.map((r) => (
                <tr key={r.n}>
                  <NameCell scope="row" $muted={r.muted}>{r.n}</NameCell>
                  <ValueCell $muted={r.muted}><PropertyValue row={r} /></ValueCell>
                </tr>
              ))}
            </tbody>
          ))}
        </PropTable>
      </PropScroll>
      <PaletteFoot><a href="#help">Properties help</a><ApplyButton disabled>Apply</ApplyButton></PaletteFoot>
    </PaletteBody>
  </Properties>
);

const ViewIcons = () => (
  <>
    <Icon w={17}><path d="M1 3h15v11H1z" fill="#fff" /><path d="M2 5h14M2 9h14M2 13h14" strokeDasharray="1 1" /><path d="M3 7h13M3 11h13" strokeDasharray="1 1" /></Icon>
    <Icon w={17}><path d="M1 7l5-5h10v7l-5 5H1zM1 7h10v7M11 7l5-5" fill="#fff" /></Icon>
    <Icon w={17}><circle cx="7" cy="8" r="4" fill="#f9d65c" stroke="#c9962a" /><path d="M7 1v2M1 8h1M2 3l2 2" stroke="#c9962a" /><RedX x={9} y={8} s={6} /></Icon>
    <Icon w={17}><circle cx="8" cy="7" r="5" fill="#e8f2fb" stroke={BLUE} /><path d="M3 14h6" /><RedX x={9} y={8} s={6} /></Icon>
    <Icon w={17}><path d="M1 10h4V4h11M3 14h3V7h10" stroke={BLUE} /><RedX x={8} y={7} s={7} /></Icon>
    <Icon w={17}><path d="M1 10h4V4h7M3 14h3V7h5" stroke={BLUE} /><circle cx="14" cy="7" r="2.500" fill="#e8f2fb" stroke={BLUE} /><path d="M13 10v5h2v-5" /></Icon>
    <Icon w={17}><path d="M1 2h15v12H1z" fill="#dfeaf5" /><path d="M3 6c2 3 4 3 5 1s4-2 6-1l-2 6H6zM5 3l3 3 5-3" fill="#8aa0b8" /></Icon>
    <Icon w={17}><circle cx="8" cy="6" r="3" fill="#d6ecfb" stroke={BLUE} /><path d="M7 9v5h2V9" stroke={BLUE} /></Icon>
    <Icon w={17}><path d="M2 3h12v11H2zM4 1v4M1 5h4" stroke="#222" strokeDasharray="3 1" /><path d="M9 9h5v5H9z" fill="#fff" stroke="#222" /></Icon>
    <Icon w={17}><path d="M1 1v15M16 1v8M1 3h15M4 1L2 3l2 2M13 1l2 2-2 2" stroke="#222" /><path d="M10 10h6v6h-6z" fill="#777" stroke="#333" /></Icon>
  </>
);

const ViewWindow = () => (
  <ViewArea>
    <Canvas>
      <FloorPlan />
      <ModeLabel>Temporary Hide/Isolate</ModeLabel>
      <Tooltip role="tooltip">Floors : Floor : Laje Piso Superior 15 : Face</Tooltip>
      <MdiButtons>
        <button aria-label="Minimize view"><Icon w={13}><path d="M1 8h11v3H1z" stroke="#444" /></Icon></button>
        <button aria-label="Restore view"><Icon w={13}><path d="M1 4h8v8H1zM4 4V1h8v8H9M4 7h2v2H4z" stroke="#444" /></Icon></button>
        <button aria-label="Close view"><Icon w={13}><path d="M1 2h3l2.500 3L9 2h3L8 7l4 5H9L6.500 9 4 12H1l4-5z" stroke="#444" /></Icon></button>
      </MdiButtons>
      <NavBar>
        <NavDot aria-label="Close navigation bar" />
        <Icon w={26} h={26}><path d="M11 1h9v10a9 9 0 1 1-9-10z" fill="#eee" stroke="#999" /><circle cx="11" cy="11" r="5" fill="#fff" stroke="#999" /><text x="13" y="24" fontSize="9" fontWeight="700" fill="#6d9bd6" stroke="none">2D</text></Icon>
        <Caret color="#999" />
        <hr />
        <Icon w={18}><path d="M1 1h11v11H1z" fill="#b9d9ae" stroke="#86a87c" /><circle cx="11" cy="11" r="3.500" fill="#f4f4f4" stroke="#999" /><path d="M14 14l3 3" stroke="#999" strokeWidth="2" /></Icon>
        <Caret color="#999" />
        <NavDot aria-label="Navigation options" />
      </NavBar>
    </Canvas>
    <VScroll><Chevron /><ScrollThumb $w={15} $h={16} /><Chevron turn={180} /></VScroll>
    <ViewControl>
      <ScaleText>1 : 100</ScaleText>
      <ViewIcons />
      <Chevron turn={-90} />
      <HTrack><ScrollThumb $w={17} $h={14} /></HTrack>
      <Chevron turn={90} />
    </ViewControl>
    <Icon w={18}><path d="M12 5h2M8 9h2M12 9h2M4 13h2M8 13h2M12 13h2" stroke="#bbb" strokeWidth="2" /></Icon>
  </ViewArea>
);

const ProjectBrowser = () => (
  <Browser>
    <PaletteHeader><span>Project Browser - AC019 - Arq 02</span><button aria-label="Close Project Browser"><Cross s={9} /></button></PaletteHeader>
    <TreeBox>
      <Tree>{renderNodes(TREE, 0, [])}</Tree>
      <BrowserScroll><Chevron turn={-90} /><ScrollThumb $w={131} $h={15} /><HalfTrack /><Chevron turn={90} /></BrowserScroll>
    </TreeBox>
  </Browser>
);

const Status = () => (
  <StatusBar>
    <StatusText>Floors : Floor : Laje Piso Superior 15 : Face</StatusText>
    <StatusTools>
      <Icon w={16}><path d="M1 7l3-2h4v8l-2 2H1z" fill={SKY} stroke={BLUE} /><path d="M5 3l3-2h4v5H5z" fill="#c8e6b8" stroke="#3f7d34" /><path d="M13 6v9M11 6l2 2 2-2" /></Icon>
      <StatusSelect $w={204} aria-label="Active workset" />
      <EditableOnly aria-label="Editable only"><Icon w={17}><path d="M3 1h12v4H9v4M6 9l-4 6h7V9z" fill="#bbb" stroke="#999" /></Icon>:0</EditableOnly>
      <StatusButton aria-label="Design options"><Icon w={17}><path d="M1 1h15v15H1z" fill="#fff" stroke="#222" /><path d="M1 3h15" strokeWidth="2" /><path d="M4 7h2M4 10h2M4 13h2M8 7h5M8 10h5M8 13h5" stroke="#222" /></Icon></StatusButton>
      <StatusButton aria-label="Pick to edit"><Icon w={16}><path d="M0 0h16v16H0z" fill="#a9a9a9" stroke="none" /><path d="M3 10l4-4v6M10 6l4 8" stroke="#ddd" /></Icon></StatusButton>
      <StatusSelect $w={155} aria-label="Design option" defaultValue="m"><option value="m">Main Model</option></StatusSelect>
    </StatusTools>
    <SelectionTools>
      <StatusButton aria-label="Select links"><Icon w={20}><rect x="1" y="3" width="8" height="5" rx="2" stroke="#c99a1a" strokeWidth="2" /><rect x="8" y="3" width="8" height="5" rx="2" stroke="#c99a1a" strokeWidth="2" /><Pointer x={8} y={5} /></Icon></StatusButton>
      <StatusButton aria-label="Select underlay"><Icon w={20}><path d="M1 9l8-7M1 9l4 5h7M1 9h10" stroke={BLUE} strokeWidth="1.500" /><RedX x={11} y={2} /><Pointer x={10} y={6} /></Icon></StatusButton>
      <StatusButton aria-label="Select pinned"><Icon w={20}><path d="M3 2h10v3H3zM4 5h8v4H4zM2 9h11M7 9v7" fill="#f0a657" stroke="#b3541e" /><Pointer x={10} y={6} /></Icon></StatusButton>
      <StatusButton aria-label="Select by face"><Icon w={20}><path d="M2 4l7-2v11l-7 3z" fill="#cfe7f6" stroke={BLUE} /><RedX x={12} y={2} /><Pointer x={10} y={6} /></Icon></StatusButton>
      <StatusButton aria-label="Drag on selection"><Icon w={20}><path d="M1 6h11M6.500 1v11M3 4L1 6l2 2M10 4l2 2-2 2M5 3l1.500-2L8 3" stroke="#222" /><Pointer x={10} y={6} /></Icon></StatusButton>
      <StatusButton aria-label="Filter"><Icon w={17}><path d="M1 2h15l-6 7v6H7V9z" fill="#dfe5ec" stroke="#333" /></Icon>:0</StatusButton>
    </SelectionTools>
  </StatusBar>
);

export default function App() {
  return (
    <Page>
      <GlobalStyle />
      <TopArea>
        <AppButton aria-label="Application menu">
          <Icon w={39} h={39}>
            <path d="M9 4l11-2c5 2 4 8-1 10l7 14-5 2-8-11-3 11-6 2z" fill="#16409a" stroke="none" />
            <path d="M9 4l4 2-5 21-4 3zM13 17l5-3 8 12-5 2z" fill="#0b2566" stroke="none" />
            <path d="M31 17h6l-3 4z" fill="#222" stroke="none" />
            <text x="19" y="37" fontSize="9" fontWeight="700" textAnchor="middle" fill="#111" stroke="none">A</text>
          </Icon>
        </AppButton>
        <TitleBar />
        <TabRow>
          {TABS.map((t) => <Tab key={t}>{t}</Tab>)}
          <Tab $on>Modify</Tab>
          <TabToggle aria-label="Minimize ribbon">
            <Icon w={14} h={9}><rect width="14" height="9" rx="2" fill="#eee" stroke="none" /><path d="M4 6h6L7 3z" fill="#333" stroke="none" /></Icon>
            <Caret color="#eee" />
          </TabToggle>
        </TabRow>
      </TopArea>
      <RibbonBar />
      <OptionsBar />
      <Work>
        <PropertiesPalette />
        <ViewWindow />
        <ProjectBrowser />
      </Work>
      <Status />
      <BottomStrip />
    </Page>
  );
}
